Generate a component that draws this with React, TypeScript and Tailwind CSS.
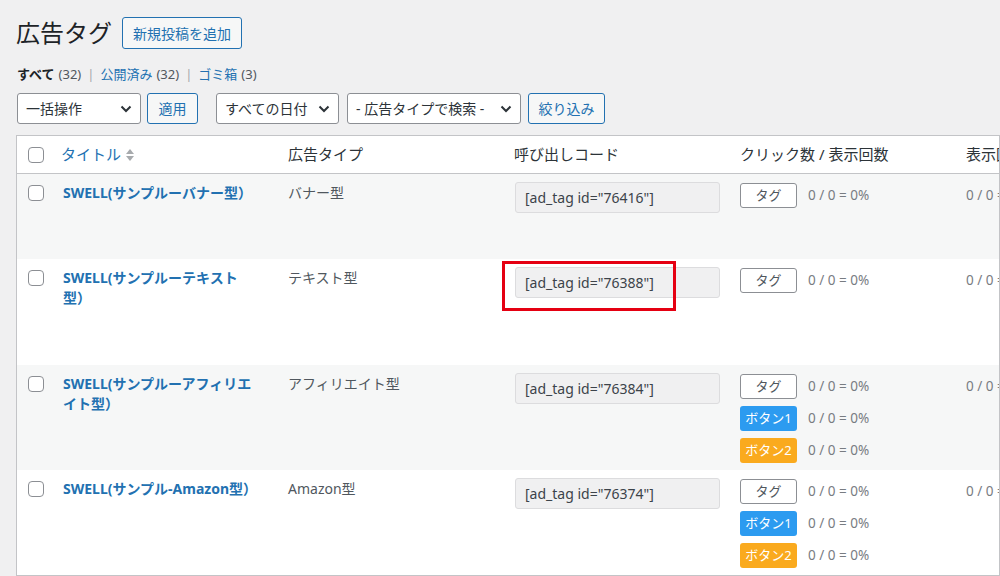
import React from 'react';

type Row = {
    title: string[];
    type: string;
    id: string;
    buttons: boolean;
    h: string;
    bg: string;
    mark?: boolean;
};

const rows: Row[] = [
    { title: ['SWELL(サンプルーバナー型）'], type: 'バナー型', id: '76416', buttons: false, h: 'h-[85px]', bg: 'bg-[#f6f7f7]' },
    { title: ['SWELL(サンプルーテキスト', '型）'], type: 'テキスト型', id: '76388', buttons: false, h: 'h-[106px]', bg: 'bg-white', mark: true },
    { title: ['SWELL(サンプルーアフィリエ', 'イト型）'], type: 'アフィリエイト型', id: '76384', buttons: true, h: 'h-[105px]', bg: 'bg-[#f6f7f7]' },
    { title: ['SWELL(サンプル-Amazon型）'], type: 'Amazon型', id: '76374', buttons: true, h: 'h-[105px]', bg: 'bg-white' },
];

function Checkbox() {
    return <span className="block w-4 h-4 rounded-[4px] border border-[#8c8f94] bg-white" />;
}

function Chevron() {
    return (
        <svg width="12" height="8" viewBox="0 0 12 8" fill="none">
            <path d="M1.5 1.5l4.5 4.5 4.5-4.5" stroke="#2c3338" strokeWidth="2" />
        </svg>
    );
}

function Select({ label, w }: { label: string; w: string }) {
    return (
        <div className={`${w} h-[31px] flex items-center justify-between border border-[#8c8f94] rounded-[3px] bg-white pl-[8px] pr-[8px] text-[14px] text-[#2c3338]`}>
            <span>{label}</span>
            <Chevron />
        </div>
    );
}

function Btn({ label, w }: { label: string; w: string }) {
    return (
        <div className={`${w} h-[31px] flex items-center justify-center border border-[#2271b1] rounded-[3px] bg-[#f6f7f7] text-[14px] text-[#2271b1]`}>
            {label}
        </div>
    );
}

function Stat({ badge }: { badge: 'tag' | 'b1' | 'b2' }) {
    const cls =
        badge === 'tag'
            ? 'border border-[#8c8f94] bg-white text-[#50575e]'
            : badge === 'b1'
              ? 'bg-[#2c9bf0] text-white'
              : 'bg-[#faaa1e] text-white';
    const label = badge === 'tag' ? 'タグ' : badge === 'b1' ? 'ボタン1' : 'ボタン2';
    return (
        <div className="flex items-center h-[25px]">
            <span className={`w-[57px] h-[25px] flex items-center justify-center rounded-[3px] text-[13px] ${cls}`}>{label}</span>
            <span className="ml-[11px] text-[13.5px] text-[#787c82]">0 / 0 = 0%</span>
        </div>
    );
}

export default function App() {
    return (
        <div className="w-[1000px] h-[576px] overflow-hidden bg-[#f0f0f1] font-['Noto_Sans','Noto_Sans_CJK_JP',sans-serif] text-[#3c434a]">
            {/* heading */}
            <div className="flex items-center pl-[16px] pt-[17px]">
                <h1 className="text-[24px] leading-[32px] text-[#1d2327]">広告タグ</h1>
                <div className="ml-[10px] h-[32px] px-[10px] flex items-center border border-[#2271b1] rounded-[3px] bg-[#f6f7f7] text-[14px] text-[#2271b1]">
                    新規投稿を追加
                </div>
            </div>

            {/* status links */}
            <div className="mt-[16px] pl-[17px] h-[20px] flex items-center text-[13px]">
                <span className="font-bold text-[#1d2327]">すべて</span>
                <span className="ml-[4px] text-[#50575e]">(32)</span>
                <span className="mx-[6px] text-[#a7aaad]">|</span>
                <span className="text-[#2271b1]">公開済み</span>
                <span className="ml-[4px] text-[#50575e]">(32)</span>
                <span className="mx-[6px] text-[#a7aaad]">|</span>
                <span className="text-[#2271b1]">ゴミ箱</span>
                <span className="ml-[4px] text-[#50575e]">(3)</span>
            </div>

            {/* filters */}
            <div className="mt-[8px] pl-[17px] flex items-center">
                <Select label="一括操作" w="w-[124px]" />
                <div className="ml-[6px]"><Btn label="適用" w="w-[51px]" /></div>
                <div className="ml-[18px]"><Select label="すべての日付" w="w-[123px]" /></div>
                <div className="ml-[8px]"><Select label="- 広告タイプで検索 -" w="w-[174px]" /></div>
                <div className="ml-[7px]"><Btn label="絞り込み" w="w-[77px]" /></div>
            </div>

            {/* table */}
            <div className="mt-[11px] ml-[16px] w-[984px] border border-[#c3c4c7] bg-white overflow-hidden">
                <div className="grid grid-cols-[36px_225px_226px_226px_226px_1fr] h-[38px] border-b border-[#c3c4c7] items-center text-[15px] text-[#2c3338]">
                    <div className="pl-[11px]"><Checkbox /></div>
                    <div className="pl-[8px] flex items-center text-[#2271b1]">
                        タイトル
                        <svg className="ml-[4px]" width="10" height="14" viewBox="0 0 10 14">
                            <path d="M5 1l4 5H1z" fill="#a7aaad" />
                            <path d="M5 13l4-5H1z" fill="#a7aaad" />
                        </svg>
                    </div>
                    <div className="pl-[10px]">広告タイプ</div>
                    <div className="pl-[10px]">呼び出しコード</div>
                    <div className="pl-[10px]">クリック数 / 表示回数</div>
                    <div className="pl-[10px] whitespace-nowrap">表示回数</div>
                </div>

                {rows.map((r) => (
                    <div key={r.id} className={`grid grid-cols-[36px_225px_226px_226px_226px_1fr] ${r.h} ${r.bg}`}>
                        <div className="pl-[11px] pt-[11px]"><Checkbox /></div>
                        <div className="px-[10px] pt-[9px] text-[14px] leading-[20px] font-bold text-[#2271b1] whitespace-nowrap">
                            {r.title.map((t) => (
                                <div key={t}>{t}</div>
                            ))}
                        </div>
                        <div className="px-[10px] pt-[9px] text-[14px] leading-[20px] text-[#50575e]">{r.type}</div>
                        <div className="relative pl-[11px] pt-[8px]">
                            <div className="w-[205px] h-[31px] flex items-center px-[9px] border border-[#dcdcde] rounded-[3px] bg-[#f0f0f1] text-[14px] text-[#3c434a]">
                                [ad_tag id="{r.id}"]
                            </div>
                            {r.mark && <div className="absolute left-[-2px] top-[2px] w-[174px] h-[50px] border-[3px] border-[#e50012]" />}
                        </div>
                        <div className="pl-[10px] pt-[9px] flex flex-col gap-[7px]">
                            <Stat badge="tag" />
                            {r.buttons && <Stat badge="b1" />}
                            {r.buttons && <Stat badge="b2" />}
                        </div>
                        <div className="pl-[10px] pt-[9px] h-[25px] leading-[25px] whitespace-nowrap text-[13.5px] text-[#787c82]">0 / 0 = 0%</div>
                    </div>
                ))}
            </div>
        </div>
    );
}
